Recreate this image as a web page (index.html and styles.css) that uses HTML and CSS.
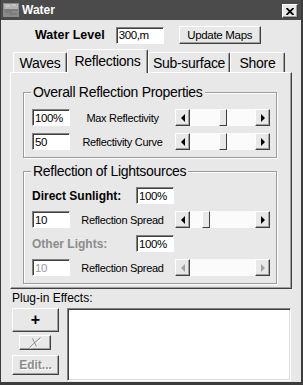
FILE: index.html
```html
<!DOCTYPE html>
<html>
<head>
    <title>Water</title>
    <link rel="stylesheet" href="styles.css">
</head>
<body>

    <div class="window">
        <div class="titlebar">
            <svg class="app-icon" width="16" height="14" viewBox="0 0 16 14">
                <rect x="0" y="0" width="16" height="14" fill="#8a8a8a"/>
                <rect x="1" y="1" width="14" height="5" fill="#b4b4b4"/>
                <path d="M1 7 H15 M2 9 H9 M6 11 H14" stroke="#6e6e6e" stroke-width="1"/>
                <path d="M3 3 H7 M9 2 H13" stroke="#d8d8d8" stroke-width="1"/>
            </svg>
            <span class="title">Water</span>
            <button class="close">
                <svg width="8" height="7" viewBox="0 0 8 7">
                    <path d="M0.5 0 L7.5 7 M7.5 0 L0.5 7" stroke="#000" stroke-width="1.8"/>
                </svg>
            </button>
        </div>

        <div class="level-row">
            <span class="level-label">Water Level</span>
            <input type="text" class="field level-field" value="300,m">
            <button class="btn update-btn">Update Maps</button>
        </div>

        <div class="tabs">
            <div class="tab tab-waves">Waves</div>
            <div class="tab tab-active">Reflections</div>
            <div class="tab tab-sub">Sub-surface</div>
            <div class="tab tab-shore">Shore</div>
        </div>

        <div class="panel">
            <div class="group">
                <span class="group-title">Overall Reflection Properties</span>
                <div class="row">
                    <input type="text" class="field" value="100%">
                    <span class="row-label">Max Reflectivity</span>
                    <div class="scroll">
                        <span class="arrow arrow-left"></span>
                        <span class="track"><span class="thumb" style="margin-left: 29px"></span></span>
                        <span class="arrow arrow-right"></span>
                    </div>
                </div>
                <div class="row">
                    <input type="text" class="field" value="50">
                    <span class="row-label">Reflectivity Curve</span>
                    <div class="scroll">
                        <span class="arrow arrow-left"></span>
                        <span class="track"><span class="thumb" style="margin-left: 29px"></span></span>
                        <span class="arrow arrow-right"></span>
                    </div>
                </div>
            </div>

            <div class="group group-lights">
                <span class="group-title">Reflection of Lightsources</span>
                <div class="row">
                    <span class="light-label">Direct Sunlight:</span>
                    <input type="text" class="field" value="100%">
                </div>
                <div class="row">
                    <input type="text" class="field" value="10">
                    <span class="row-label">Reflection Spread</span>
                    <div class="scroll">
                        <span class="arrow arrow-left"></span>
                        <span class="track"><span class="thumb" style="margin-left: 12px"></span></span>
                        <span class="arrow arrow-right"></span>
                    </div>
                </div>
                <div class="row">
                    <span class="light-label light-off">Other Lights:</span>
                    <input type="text" class="field" value="100%">
                </div>
                <div class="row">
                    <input type="text" class="field" value="10" disabled>
                    <span class="row-label">Reflection Spread</span>
                    <div class="scroll scroll-off">
                        <span class="arrow arrow-left"></span>
                        <span class="track"></span>
                        <span class="arrow arrow-right"></span>
                    </div>
                </div>
            </div>
        </div>

        <div class="plugins-label">Plug-in Effects:</div>
        <div class="plugins">
            <div class="plugin-buttons">
                <button class="btn add-btn">+</button>
                <button class="btn remove-btn" disabled>
                    <svg width="16" height="12" viewBox="0 0 16 12">
                        <path d="M3.5 11.5 L14.5 1.5 M6.5 2.5 L10.5 10.5" stroke="#fff" stroke-width="1"/>
                        <path d="M2.5 10.5 L13.5 0.5 M5.5 1.5 L9.5 9.5" stroke="#8a8a8a" stroke-width="1"/>
                    </svg>
                </button>
                <button class="btn edit-btn" disabled>Edit...</button>
            </div>
            <div class="listbox"></div>
        </div>
    </div>

</body>
</html>
```

FILE: styles.css
```css
body {
    margin: 0;
    background: #e8e8e8;
}

.window {
    width: 303px;
    height: 385px;
    box-sizing: border-box;
    background: #e8e8e8;
    border-left: 1px solid #3c3c3c;
    border-right: 2px solid #3c3c3c;
    border-bottom: 3px solid #3c3c3c;
    font-family: "Liberation Sans", Arial, sans-serif;
    color: #000;
}

/* title bar */
.titlebar {
    height: 20px;
    background: #4b4b4b;
    display: flex;
    align-items: center;
}

.app-icon {
    margin-left: 2px;
}

.title {
    margin-left: 3px;
    color: #fff;
    font-weight: bold;
    font-size: 12px;
}

.close {
    margin-left: auto;
    margin-right: 3px;
    align-self: flex-start;
    margin-top: 4px;
    width: 16px;
    height: 14px;
    padding: 0;
    box-sizing: border-box;
    background: #e8e8e8;
    border: 1px solid;
    border-color: #fff #404040 #404040 #fff;
    box-shadow: inset -1px -1px #a0a0a0;
    display: flex;
    align-items: center;
    justify-content: center;
}

/* shared controls */
.btn {
    box-sizing: border-box;
    padding: 0;
    background: #e8e8e8;
    border: 1px solid;
    border-color: #fff #404040 #404040 #fff;
    box-shadow: inset -1px -1px #a0a0a0;
    color: #000;
    font-family: "Liberation Sans", Arial, sans-serif;
}

.field {
    box-sizing: border-box;
    width: 38px;
    height: 17px;
    margin: 0;
    padding: 0 0 0 2px;
    border: 1px solid;
    border-color: #808080 #fff #fff #808080;
    box-shadow: inset 1px 1px #404040;
    background: #fff;
    font-family: "Liberation Sans", Arial, sans-serif;
    font-size: 11.5px;
    letter-spacing: -0.4px;
    color: #000;
    outline: none;
}

.field:disabled {
    color: #9a9a9a;
    background: #fff;
}

/* water level row */
.level-row {
    display: flex;
    align-items: center;
    margin-top: 6px;
    height: 18px;
    padding-left: 34px;
}

.level-label {
    font-weight: bold;
    font-size: 12.5px;
}

.level-field {
    width: 48px;
    margin-left: 11px;
}

.update-btn {
    width: 82px;
    height: 18px;
    margin-left: 15px;
    font-size: 11.5px;
    letter-spacing: -0.3px;
}

/* tabs */
.tabs {
    display: flex;
    align-items: flex-end;
    height: 23px;
    margin-top: 5px;
    padding-left: 12px;
    position: relative;
    z-index: 1;
}

.tab {
    box-sizing: border-box;
    height: 20px;
    padding-top: 1px;
    border-top: 1px solid #fff;
    border-left: 1px solid #fff;
    border-right: 1px solid #404040;
    box-shadow: inset -1px 0 #a0a0a0;
    border-radius: 2px 2px 0 0;
    background: #e8e8e8;
    font-size: 14px;
    letter-spacing: -0.3px;
    line-height: 18px;
    text-align: center;
}

.tab-waves { width: 54px; }
.tab-sub { width: 82px; }
.tab-shore { width: 55px; }

.tab-active {
    width: 81px;
    height: 24px;
    padding-top: 2px;
    margin-bottom: -1px;
}

/* tab panel */
.panel {
    box-sizing: border-box;
    width: 282px;
    height: 217px;
    margin-left: 9px;
    padding: 19px 0 0 12px;
    border: 1px solid;
    border-color: #fff #404040 #404040 #fff;
    box-shadow: inset -1px -1px #a0a0a0;
}

.group {
    position: relative;
    box-sizing: border-box;
    width: 254px;
    padding: 16px 6px 7px 8px;
    border: 1px solid #9c9c9c;
    box-shadow: inset 1px 1px #fff, 1px 1px #fff;
    display: flex;
    flex-direction: column;
    gap: 7px;
}

.group-lights {
    margin-top: 13px;
    padding-top: 15px;
}

.group-title {
    position: absolute;
    top: -9px;
    left: 7px;
    padding: 0 2px;
    background: #e8e8e8;
    font-size: 14px;
    letter-spacing: -0.3px;
    line-height: 16px;
}

.row {
    display: flex;
    align-items: center;
    height: 17px;
}

.row-label {
    flex: 1;
    text-align: center;
    font-size: 11px;
    letter-spacing: -0.3px;
}

.light-label {
    width: 104px;
    font-weight: bold;
    font-size: 12px;
}

.light-off {
    color: #8c8c8c;
}

/* scroll bars */
.scroll {
    display: flex;
    width: 95px;
    height: 17px;
}

.arrow {
    box-sizing: border-box;
    width: 15px;
    height: 17px;
    background: #e8e8e8;
    border: 1px solid;
    border-color: #fff #404040 #404040 #fff;
    box-shadow: inset -1px -1px #a0a0a0;
    display: flex;
    align-items: center;
    justify-content: center;
}

.arrow::before {
    content: "";
    border-top: 4px solid transparent;
    border-bottom: 4px solid transparent;
}

.arrow-left::before {
    border-right: 4px solid #000;
}

.arrow-right::before {
    border-left: 4px solid #000;
}

.scroll-off .arrow-left::before {
    border-right-color: #a0a0a0;
}

.scroll-off .arrow-right::before {
    border-left-color: #a0a0a0;
}

.track {
    flex: 1;
    display: flex;
    background: #fbfbfb;
}

.thumb {
    box-sizing: border-box;
    width: 8px;
    height: 17px;
    background: #e8e8e8;
    border: 1px solid;
    border-color: #fff #404040 #404040 #fff;
}

/* plug-ins */
.plugins-label {
    margin: 2px 0 0 11px;
    font-size: 12px;
    line-height: 14px;
}

.plugins {
    display: flex;
    margin: 3px 0 0 11px;
}

.plugin-buttons {
    width: 47px;
    display: flex;
    flex-direction: column;
    align-items: flex-start;
}

.add-btn {
    width: 47px;
    height: 24px;
    font-size: 16px;
    font-weight: bold;
}

.remove-btn {
    width: 32px;
    height: 15px;
    margin: 3px 0 0 7px;
    display: flex;
    align-items: center;
    justify-content: center;
}

.edit-btn {
    width: 47px;
    height: 20px;
    margin-top: 5px;
    font-size: 12px;
    font-weight: bold;
    color: #8c8c8c;
    text-shadow: 1px 1px #fff;
}

.listbox {
    box-sizing: border-box;
    width: 224px;
    height: 73px;
    margin-left: 8px;
    background: #fff;
    border: 1px solid;
    border-color: #808080 #fff #fff #808080;
    box-shadow: inset 1px 1px #404040, inset -1px -1px #dcdcdc;
}
```
